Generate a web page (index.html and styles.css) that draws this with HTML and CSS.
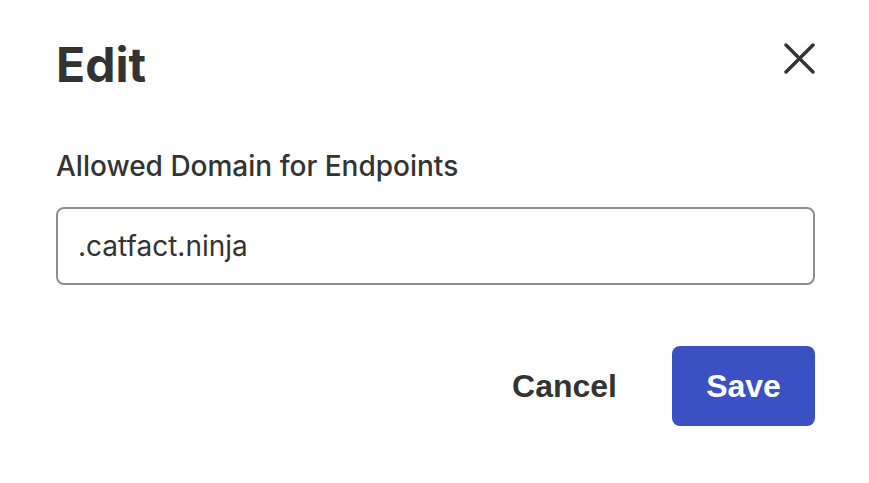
FILE: index.html
```html
<!DOCTYPE html>
<html lang="en">
<head>
<meta charset="utf-8">
<title>Edit</title>
<link rel="stylesheet" href="styles.css">
</head>
<body>
<div class="dialog">
  <div class="header">
    <h1 class="title">Edit</h1>
    <button class="close" aria-label="Close">
      <svg width="31" height="31" viewBox="0 0 31 31"><path d="M2 2 L29 29 M29 2 L2 29" stroke="#333" stroke-width="3.4" stroke-linecap="round" fill="none"/></svg>
    </button>
  </div>
  <label class="label" for="domain">Allowed Domain for Endpoints</label>
  <input id="domain" class="input" type="text" value=".catfact.ninja">
  <div class="actions">
    <button class="btn btn-cancel">Cancel</button>
    <button class="btn btn-save">Save</button>
  </div>
</div>
</body>
</html>
```

FILE: styles.css
```css
html, body {
  margin: 0;
  padding: 0;
  background: #fff;
}
.dialog {
  width: 869px;
  height: 483px;
  box-sizing: border-box;
  padding: 36px 54px 0 56px;
  font-family: Inter, "Noto Sans", sans-serif;
  color: #333;
  display: flex;
  flex-direction: column;
}
.header {
  display: flex;
  justify-content: space-between;
  align-items: flex-start;
  height: 58px;
}
.title {
  margin: 0;
  font-size: 48px;
  font-weight: 700;
  line-height: 58px;
  color: #333;
}
.close {
  border: 0;
  background: none;
  padding: 0;
  width: 31px;
  height: 31px;
  margin-top: 7px;
  cursor: pointer;
}
.close svg { display: block; }
.label {
  margin-top: 55px;
  font-size: 28px;
  font-weight: 500;
  line-height: 34px;
}
.input {
  margin-top: 24px;
  height: 78px;
  box-sizing: border-box;
  border: 2px solid #8e8e8e;
  border-radius: 8px;
  padding: 0 20px;
  font-family: Inter, "Noto Sans", sans-serif;
  font-size: 28px;
  color: #333;
  outline: none;
}
.actions {
  margin-top: 61px;
  display: flex;
  justify-content: flex-end;
  gap: 21px;
}
.btn {
  height: 80px;
  border: 0;
  border-radius: 8px;
  padding: 0 34px;
  font-family: "Liberation Sans", Arial, sans-serif;
  font-weight: 700;
  font-size: 32px;
  cursor: pointer;
}
.btn-cancel {
  background: none;
  color: #333;
}
.btn-save {
  background: #3b50c3;
  color: #fff;
  width: 143px;
  padding: 0;
}
```
